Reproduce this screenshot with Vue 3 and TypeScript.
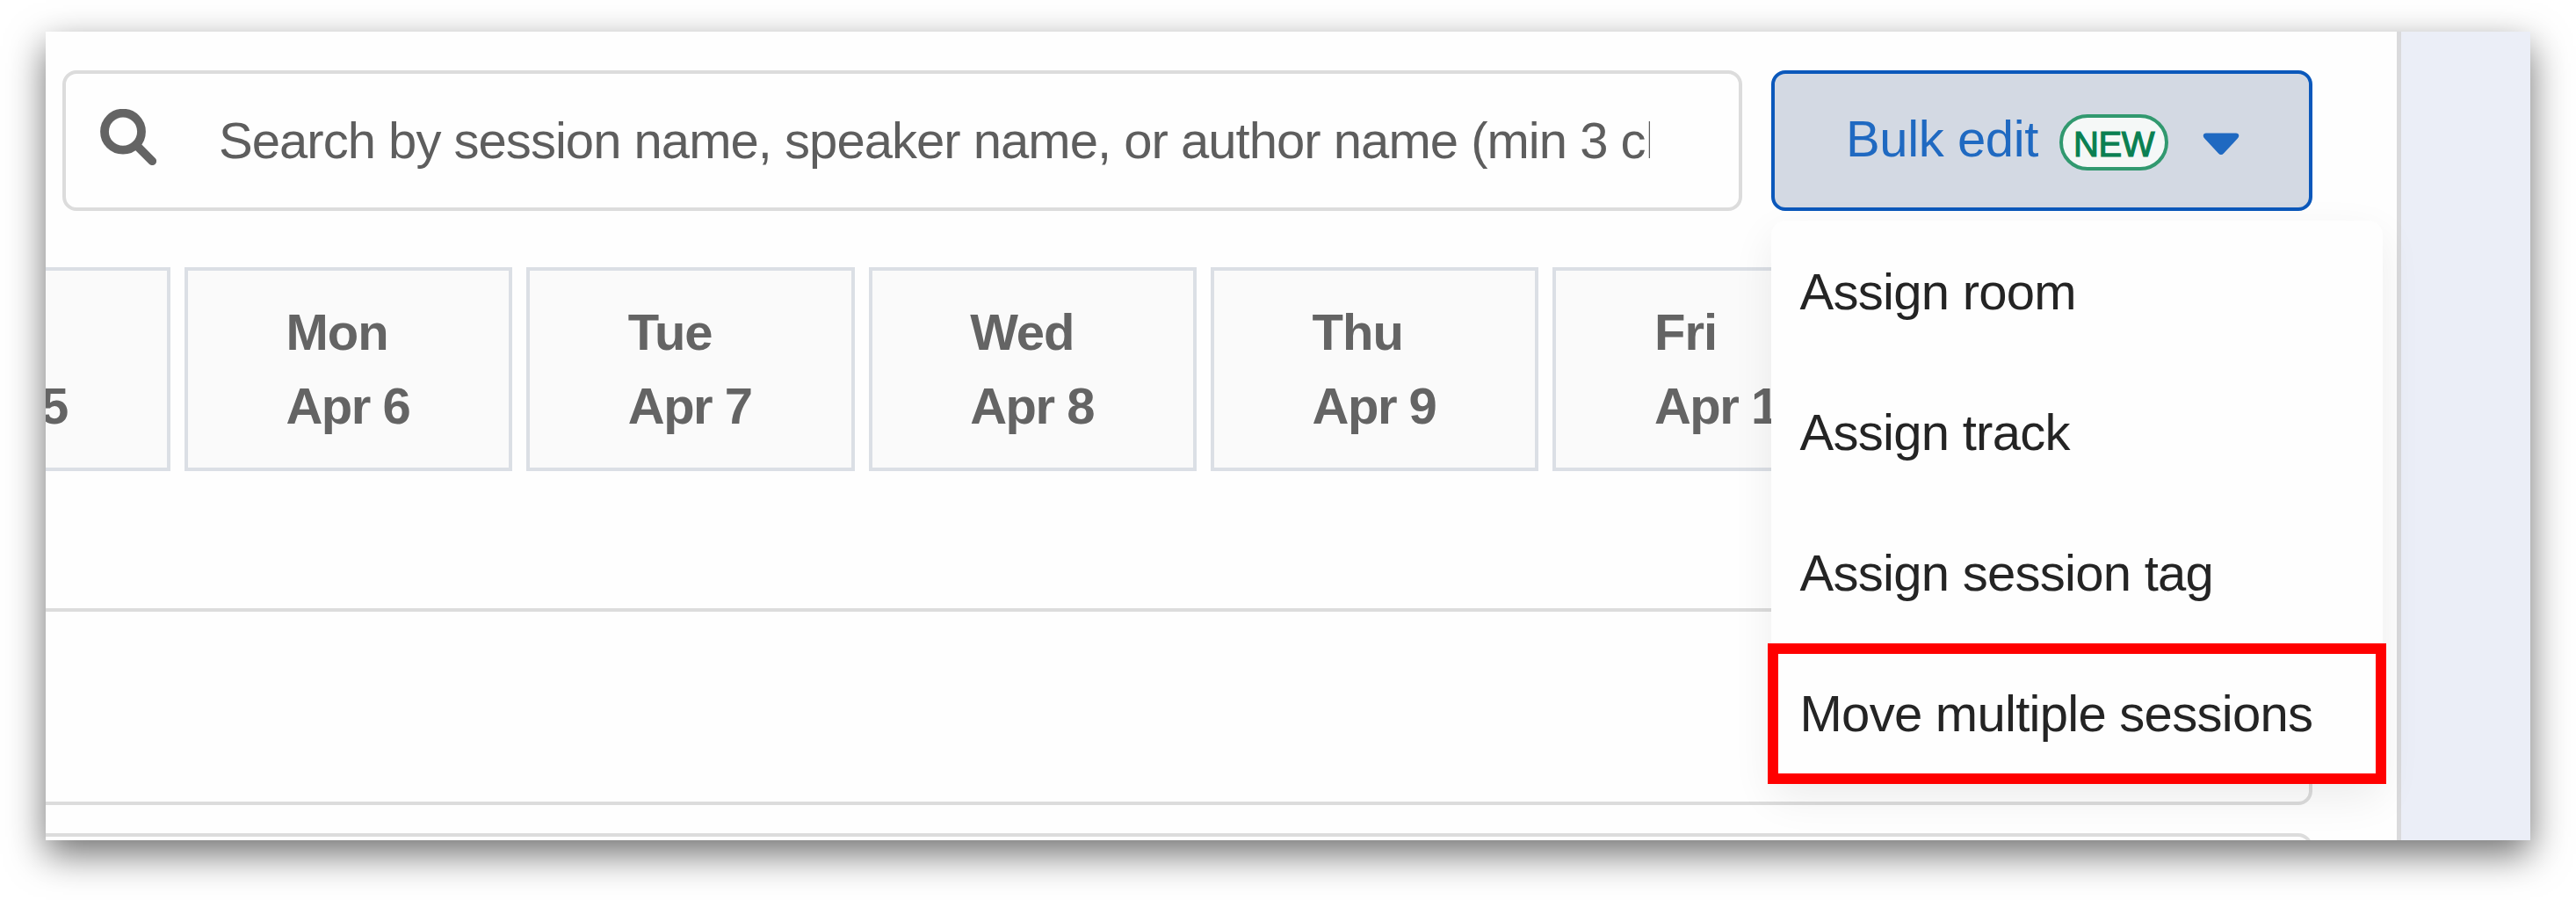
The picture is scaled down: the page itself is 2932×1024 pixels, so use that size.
<script setup lang="ts">
interface Day {
  name: string
  date: string
}

const days: Day[] = [
  { name: 'Sun', date: 'Apr 5' },
  { name: 'Mon', date: 'Apr 6' },
  { name: 'Tue', date: 'Apr 7' },
  { name: 'Wed', date: 'Apr 8' },
  { name: 'Thu', date: 'Apr 9' },
  { name: 'Fri', date: 'Apr 10' },
]

const actions: string[] = ['Assign room', 'Assign track', 'Assign session tag', 'Move multiple sessions']
</script>

<template>
  <div class="page">
    <div class="window">
      <main class="content">
        <div class="toolbar">
          <div class="search">
            <svg class="search-icon" viewBox="0 0 64 64" width="64" height="64">
              <circle cx="26" cy="25.7" r="21" fill="none" stroke="#646464" stroke-width="9.8" />
              <path d="M42 42 L59.3 59.3" stroke="#646464" stroke-width="9.6" stroke-linecap="round" />
            </svg>
            <div class="placeholder">Search by session name, speaker name, or author name (min 3 ch</div>
          </div>
          <div class="bulk">
            <button class="bulk-button" type="button">
              <span class="bulk-label">Bulk edit</span>
              <span class="badge">NEW</span>
              <svg class="caret" viewBox="0 0 42 26" width="42" height="26">
                <path d="M4 0.5 H38 Q41 0.5 41.3 3.2 Q41.3 5 39.8 6.6 L24 23.6 Q21 26.6 18 23.6 L2.2 6.6 Q0.7 5 0.7 3.2 Q1 0.5 4 0.5 Z" fill="#1f69c1" />
              </svg>
            </button>
            <div class="menu">
              <div v-for="action in actions" :key="action" class="menu-item">{{ action }}</div>
              <div class="highlight"></div>
            </div>
          </div>
        </div>
        <div class="days">
          <div v-for="day in days" :key="day.date" class="day">
            <span class="day-name">{{ day.name }}</span>
            <span>{{ day.date }}</span>
          </div>
        </div>
        <section class="panel"></section>
        <section class="panel next"></section>
      </main>
      <aside class="side"></aside>
    </div>
  </div>
</template>

<style>
body {
  margin: 0;
  background: #fff;
}
</style>

<style scoped>
.page {
  box-sizing: border-box;
  width: 2932px;
  height: 1024px;
  padding: 36px 52px 68px;
  overflow: hidden;
  background: #fff;
  font-family: "Liberation Sans", Arial, sans-serif;
  font-size: 58px;
}
.page * {
  box-sizing: border-box;
}
.window {
  display: flex;
  width: 2828px;
  height: 920px;
  overflow: hidden;
  background: #fefefe;
  box-shadow: 0 16px 40px rgba(0, 0, 0, 0.56);
}
.content {
  width: 2676px;
  flex: none;
  padding-top: 44px;
}
.side {
  flex: 1;
  border-left: 5px solid #dadadc;
  background: #ebeef7;
}
.toolbar {
  display: flex;
  gap: 33px;
  height: 160px;
  margin-left: 19px;
}
.search {
  display: flex;
  width: 1912px;
  height: 160px;
  padding: 36px 0 0 39px;
  border: 4px solid #dcdcdc;
  border-radius: 16px;
}
.search-icon {
  flex: none;
  margin-top: 4px;
}
.placeholder {
  width: 1629px;
  height: 80px;
  margin-left: 71px;
  overflow: hidden;
  color: #5e5e5e;
  line-height: 80px;
  letter-spacing: -0.97px;
  white-space: nowrap;
}
.bulk {
  position: relative;
  width: 616px;
}
.bulk-button {
  display: flex;
  align-items: flex-start;
  width: 616px;
  height: 160px;
  margin: 0;
  padding: 36px 0 0 81px;
  border: 4px solid #0b58bb;
  border-radius: 16px;
  background: #d3d9e3;
  color: #1f69c1;
  font: inherit;
}
.bulk-label {
  width: 243px;
  flex: none;
  line-height: 76px;
  letter-spacing: -0.4px;
  text-align: left;
  white-space: nowrap;
}
.badge {
  width: 124px;
  height: 64px;
  margin-top: 10px;
  border: 4px solid #31996f;
  border-radius: 32px;
  background: #f5f8f7;
  color: #0a8052;
  font-size: 40px;
  line-height: 60px;
  letter-spacing: -0.4px;
  text-align: center;
  -webkit-text-stroke: 1.2px #0a8052;
}
.caret {
  margin: 31px 0 0 39px;
}
.menu {
  position: absolute;
  z-index: 1;
  top: 171px;
  left: 0;
  width: 696px;
  height: 641px;
  border-radius: 16px;
  background: #fefefe;
  box-shadow: 0 16px 48px rgba(0, 0, 0, 0.07);
  color: #242424;
}
.menu-item {
  height: 160px;
  padding-left: 32.5px;
  line-height: 162px;
  letter-spacing: -0.72px;
  white-space: nowrap;
}
.highlight {
  position: absolute;
  top: 481px;
  left: -4px;
  width: 704px;
  height: 160px;
  border: 12px solid #ff0000;
}
.days {
  display: flex;
  gap: 16px;
  margin: 64px 0 0 -231.5px;
}
.day {
  display: flex;
  flex-direction: column;
  flex: none;
  width: 373.4px;
  height: 232px;
  padding: 28px 0 0 111.5px;
  border: 4px solid #dbdfe5;
  background: #fafafa;
  color: #646464;
  font-weight: bold;
  line-height: 84px;
  letter-spacing: -1.5px;
  white-space: nowrap;
}
.day-name {
  letter-spacing: -1px;
}
.panel {
  width: 2620px;
  height: 224px;
  margin: 156px 0 0 -40px;
  border: 4px solid #dcdcdc;
  border-radius: 16px;
}
.next {
  margin-top: 32px;
}
</style>
